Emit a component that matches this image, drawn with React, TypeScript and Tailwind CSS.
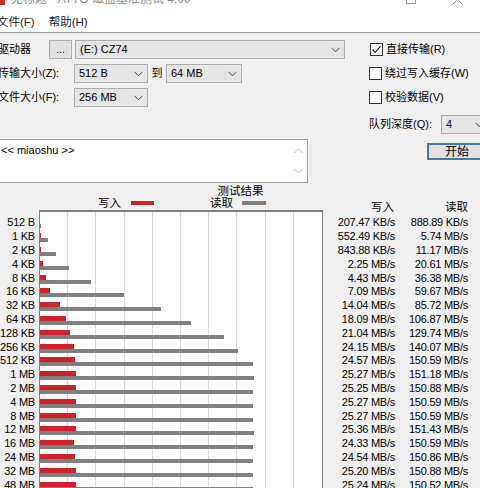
import React from "react";

const rows: [string, string, string, number, number][] = [
  ["512 B", "207.47 KB/s", "888.89 KB/s", 0.207, 0.868],
  ["1 KB", "552.49 KB/s", "5.74 MB/s", 0.54, 5.74],
  ["2 KB", "843.88 KB/s", "11.17 MB/s", 0.824, 11.17],
  ["4 KB", "2.25 MB/s", "20.61 MB/s", 2.25, 20.61],
  ["8 KB", "4.43 MB/s", "36.38 MB/s", 4.43, 36.38],
  ["16 KB", "7.09 MB/s", "59.67 MB/s", 7.09, 59.67],
  ["32 KB", "14.04 MB/s", "85.72 MB/s", 14.04, 85.72],
  ["64 KB", "18.09 MB/s", "106.87 MB/s", 18.09, 106.87],
  ["128 KB", "21.04 MB/s", "129.74 MB/s", 21.04, 129.74],
  ["256 KB", "24.15 MB/s", "140.07 MB/s", 24.15, 140.07],
  ["512 KB", "24.57 MB/s", "150.59 MB/s", 24.57, 150.59],
  ["1 MB", "25.27 MB/s", "151.18 MB/s", 25.27, 151.18],
  ["2 MB", "25.25 MB/s", "150.88 MB/s", 25.25, 150.88],
  ["4 MB", "25.27 MB/s", "150.59 MB/s", 25.27, 150.59],
  ["8 MB", "25.27 MB/s", "150.59 MB/s", 25.27, 150.59],
  ["12 MB", "25.36 MB/s", "151.43 MB/s", 25.36, 151.43],
  ["16 MB", "24.33 MB/s", "150.59 MB/s", 24.33, 150.59],
  ["24 MB", "24.54 MB/s", "150.86 MB/s", 24.54, 150.86],
  ["32 MB", "25.20 MB/s", "150.88 MB/s", 25.2, 150.88],
  ["48 MB", "25.24 MB/s", "150.52 MB/s", 25.24, 150.52],
];

const PX_PER = 283 / 200;

function Chevron() {
  return (
    <svg width="9" height="6" viewBox="0 0 9 6" className="shrink-0">
      <path d="M0.5 0.8 L4.5 4.8 L8.5 0.8" fill="none" stroke="#444" strokeWidth="1" />
    </svg>
  );
}

function Select({ w, text }: { w: string; text: string }) {
  return (
    <div className={`${w} shrink-0 h-[19px] bg-[#e5e5e5] border border-[#acacac] flex items-center justify-between pl-[4px] pr-[4px]`}>
      <span>{text}</span>
      <Chevron />
    </div>
  );
}

function Check({ checked, label }: { checked?: boolean; label: string }) {
  return (
    <div className="flex items-center gap-[3px] shrink-0 whitespace-nowrap">
      <div className="w-[13px] h-[13px] bg-white border border-[#333] flex items-center justify-center">
        {checked && (
          <svg width="11" height="11" viewBox="0 0 11 11">
            <path d="M1.5 5.5 L4.2 8.3 L9.6 2.2" fill="none" stroke="#222" strokeWidth="1.2" />
          </svg>
        )}
      </div>
      <span>{label}</span>
    </div>
  );
}

export default function App() {
  return (
    <div
      className="w-[480px] h-[488px] overflow-hidden bg-[#f0f0f0] text-black text-[11px] leading-none"
      style={{ fontFamily: '"Liberation Sans", "Noto Sans CJK SC", sans-serif' }}
    >
      {/* title bar */}
      <div className="h-[24px] -mt-[13px] bg-white flex items-center relative text-[12px] text-[#8a8a8a]">
        <div className="w-[7px] h-[12px] bg-[#d42a2a] mr-[6px] -ml-[2px] shrink-0" />
        <span className="whitespace-nowrap">无标题 - ATTO 磁盘基准测试 4.00</span>
        <div className="ml-auto flex items-center h-full shrink-0">
          <div className="w-[46px] flex justify-center">
            <div className="w-[10px] h-px bg-[#999]" />
          </div>
          <div className="w-[46px] flex justify-center">
            <div className="w-[10px] h-[10px] border border-[#999]" />
          </div>
          <div className="w-[46px] flex justify-center">
            <svg width="11" height="11" viewBox="0 0 11 11">
              <path d="M0.5 0.5 L10.5 10.5 M10.5 0.5 L0.5 10.5" stroke="#999" strokeWidth="1" />
            </svg>
          </div>
        </div>
      </div>
      {/* menu */}
      <div className="h-[21px] pt-[2px] bg-white flex items-center gap-[14px] -ml-[3px] text-[11.5px] text-[#222]">
        <span>文件(F)</span>
        <span>帮助(H)</span>
      </div>
      <div className="h-px bg-[#a0a0a0]" />
      <div className="h-px bg-[#e3e3e3]" />

      {/* controls */}
      <div className="flex flex-col -ml-[2px] w-[482px]">
        <div className="mt-[6px] h-[19px] flex items-center">
          <div className="w-[51px] shrink-0">驱动器</div>
          <div className="w-[23px] shrink-0 h-[19px] bg-[#e1e1e1] border border-[#adadad] flex items-center justify-center text-[10px]">...</div>
          <div className="w-[3px] shrink-0" />
          <Select w="w-[270px]" text="(E:) CZ74" />
          <div className="w-[25px] shrink-0" />
          <Check checked label="直接传输(R)" />
        </div>
        <div className="mt-[5px] h-[19px] flex items-center">
          <div className="w-[76px] shrink-0 whitespace-nowrap">传输大小(Z):</div>
          <Select w="w-[74px]" text="512 B" />
          <div className="w-[18px] shrink-0 text-center">到</div>
          <Select w="w-[76px]" text="64 MB" />
          <div className="w-[127px] shrink-0" />
          <Check label="绕过写入缓存(W)" />
        </div>
        <div className="mt-[5px] h-[19px] flex items-center">
          <div className="w-[76px] shrink-0 whitespace-nowrap">文件大小(F):</div>
          <Select w="w-[74px]" text="256 MB" />
          <div className="w-[221px] shrink-0" />
          <Check label="校验数据(V)" />
        </div>
        <div className="mt-[8px] h-[19px] flex items-center">
          <div className="w-[371px] shrink-0" />
          <div className="w-[72px] shrink-0 whitespace-nowrap">队列深度(Q):</div>
          <Select w="w-[48px]" text="4" />
        </div>
        <div className="mt-[5px] flex items-start">
          <div className="w-[310px] shrink-0 h-[44px] bg-white border border-[#a0a0a0] flex justify-between">
            <span className="pt-[5px] pl-[2px]">&lt;&lt; miaoshu &gt;&gt;</span>
            <div className="w-[17px] flex flex-col justify-between items-center py-[8px]">
              <svg width="9" height="6" viewBox="0 0 9 6">
                <path d="M0.5 5 L4.5 1 L8.5 5" fill="none" stroke="#b8b8b8" strokeWidth="1" />
              </svg>
              <svg width="9" height="6" viewBox="0 0 9 6">
                <path d="M0.5 1 L4.5 5 L8.5 1" fill="none" stroke="#b8b8b8" strokeWidth="1" />
              </svg>
            </div>
          </div>
          <div className="w-[119px] shrink-0" />
          <div className="mt-[4px] shrink-0 w-[60px] h-[17px] bg-[#e1e1e1] border-2 border-[#3a7bbd] flex items-center justify-center text-[12px]">
            开始
          </div>
        </div>
      </div>

      {/* chart header */}
      <div className="h-[27px]">
        <div className="pt-[3px] flex justify-center text-[11.5px] pl-[1px]">测试结果</div>
        <div className="flex items-start text-[11.5px] whitespace-nowrap">
          <span className="ml-[98px]">写入</span>
          <div className="ml-[10px] mt-[3px] w-[23px] h-[4px] bg-[#d02128]" />
          <span className="ml-[56px]">读取</span>
          <div className="ml-[9px] mt-[3px] w-[24px] h-[4px] bg-[#808080]" />
          <span className="ml-[105px] mt-[4px]">写入</span>
          <span className="ml-[51px] mt-[4px]">读取</span>
        </div>
      </div>

      {/* chart */}
      <div className="flex">
        <div className="w-[39px] shrink-0 flex flex-col pt-[6px]">
          {rows.map((r) => (
            <div key={r[0]} className="h-[13.8px] flex items-center justify-end pr-[4px] whitespace-nowrap tracking-[-0.2px]">
              {r[0]}
            </div>
          ))}
        </div>
        <div className="w-[284px] shrink-0 relative bg-white border-l border-t-2 border-r border-[#808080] pt-[5px]">
          <div className="absolute inset-0 grid grid-cols-10">
            {Array.from({ length: 10 }).map((_, i) => (
              <div key={i} className={i < 9 ? "border-r border-[#d8d8d8]" : ""} />
            ))}
          </div>
          <div className="relative flex flex-col">
            {rows.map((r) => (
              <div key={r[0]} className="h-[13.8px] flex flex-col justify-center">
                <div className="h-[5px] bg-[#d02128]" style={{ width: `${Math.round(r[3] * PX_PER)}px` }} />
                <div className="h-[4px] bg-[#808080]" style={{ width: `${Math.round(r[4] * PX_PER)}px` }} />
              </div>
            ))}
          </div>
        </div>
        <div className="flex-1 flex flex-col pt-[6px] tracking-[-0.25px]">
          {rows.map((r) => (
            <div key={r[0]} className="h-[13.8px] flex items-center whitespace-nowrap">
              <div className="w-[72px] text-right">{r[1]}</div>
              <div className="w-[73px] text-right">{r[2]}</div>
            </div>
          ))}
        </div>
      </div>
    </div>
  );
}
